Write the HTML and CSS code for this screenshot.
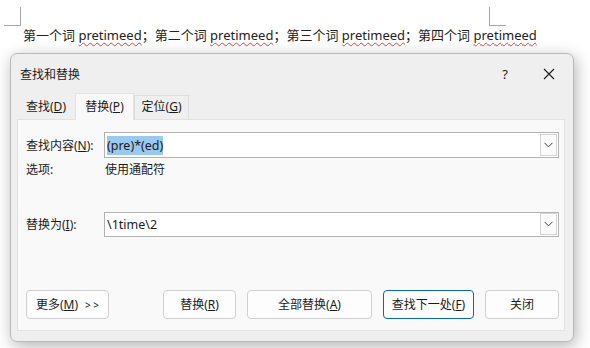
FILE: index.html
```html
<!DOCTYPE html>
<html lang="zh-CN">
<head>
<meta charset="utf-8">
<link rel="stylesheet" href="styles.css">
</head>
<body>
<div class="doc">
  <div class="marks">
    <span class="mark mark-left"></span>
    <span class="mark mark-right"></span>
  </div>
  <p class="doc-line">第一个词 <span class="spell">pretimeed</span>；第二个词 <span class="spell">pretimeed</span>；第三个词 <span class="spell">pretimeed</span>；第四个词 <span class="spell">pretimeed</span></p>
</div>

<div class="dialog">
  <div class="titlebar">
    <span class="title">查找和替换</span>
    <span class="help">?</span>
    <span class="close">
      <svg width="12" height="12" viewBox="0 0 12 12"><path d="M1 1 L11 11 M11 1 L1 11" stroke="#1b1b1b" stroke-width="1.1" fill="none"/></svg>
    </span>
  </div>
  <div class="tabs">
    <span class="tab tab-first">查找(<u>D</u>)</span>
    <span class="tab tab-active">替换(<u>P</u>)</span>
    <span class="tab">定位(<u>G</u>)</span>
  </div>
  <div class="panel">
    <div class="row">
      <span class="label">查找内容(<u>N</u>):</span>
      <div class="field">
        <span class="value"><span class="sel">(pre)*(ed)</span></span>
        <span class="drop"><svg width="9" height="6" viewBox="0 0 9 6"><path d="M0.5 0.8 L4.5 4.8 L8.5 0.8" stroke="#444" stroke-width="1" fill="none"/></svg></span>
      </div>
    </div>
    <div class="row-opt">
      <span class="label">选项:</span>
      <span class="opt">使用通配符</span>
    </div>
    <div class="row row-replace">
      <span class="label">替换为(<u>I</u>):</span>
      <div class="field">
        <span class="value">\1time\2</span>
        <span class="drop"><svg width="9" height="6" viewBox="0 0 9 6"><path d="M0.5 0.8 L4.5 4.8 L8.5 0.8" stroke="#444" stroke-width="1" fill="none"/></svg></span>
      </div>
    </div>
    <div class="buttons">
      <span class="btn btn-more">更多(<u>M</u>)<span class="chev">&gt; &gt;</span></span>
      <span class="btn btn-replace">替换(<u>R</u>)</span>
      <span class="btn btn-all">全部替换(<u>A</u>)</span>
      <span class="btn btn-next">查找下一处(<u>F</u>)</span>
      <span class="btn btn-close">关闭</span>
    </div>
  </div>
</div>
</body>
</html>
```

FILE: styles.css
```css
html, body {
  margin: 0;
  padding: 0;
}
body {
  width: 590px;
  height: 348px;
  overflow: hidden;
  background: #ffffff;
  font-family: "Noto Sans", "Noto Sans CJK SC", sans-serif;
  font-size: 12px;
  color: #1b1b1b;
}
.doc {
  padding-top: 7px;
}
.marks {
  display: flex;
  height: 19px;
}
.mark {
  display: block;
  width: 17px;
  height: 19px;
  box-sizing: border-box;
  border-bottom: 1px solid #a6a6a6;
}
.mark-left {
  margin-left: 4px;
  border-right: 1px solid #a6a6a6;
}
.mark-right {
  margin-left: 468px;
  border-left: 1px solid #a6a6a6;
}
.doc-line {
  margin: 0;
  padding-left: 23px;
  font-size: 13px;
  line-height: 18px;
  color: #222;
  white-space: nowrap;
}
.spell {
  text-decoration: underline wavy #e0413b;
  text-decoration-thickness: 1px;
  text-underline-offset: 2px;
  text-decoration-skip-ink: none;
}
.dialog {
  margin: 9px 0 0 10px;
  width: 564px;
  height: 289px;
  box-sizing: border-box;
  background: #efefef;
  border: 1px solid #b9b9b9;
  border-radius: 7px;
  box-shadow: 2px 4px 16px rgba(0, 0, 0, 0.3);
  display: flex;
  flex-direction: column;
}
.titlebar {
  height: 39px;
  display: flex;
  align-items: center;
  padding-left: 9px;
}
.title {
  font-size: 12px;
  flex: 1;
}
.help {
  font-size: 13px;
  width: 10px;
  margin-right: 33px;
  text-align: center;
}
.close {
  display: flex;
  width: 12px;
  height: 12px;
  margin-right: 18px;
}
.tabs {
  display: flex;
  align-items: flex-end;
  height: 26px;
  margin-left: 6px;
}
.tab {
  box-sizing: border-box;
  height: 24px;
  line-height: 22px;
  padding: 0 6px;
  text-align: center;
  border: 1px solid #dedede;
  border-bottom: none;
  background: #efefef;
}
.tab-first {
  width: 58px;
  border-color: transparent;
}
.tab-active {
  width: 59px;
  height: 27px;
  line-height: 25px;
  background: #f9f9f9;
  border-color: #e2e2e2;
  margin-bottom: -1px;
  position: relative;
}
.tab:last-child {
  width: 55px;
}
.panel {
  box-sizing: border-box;
  margin-left: 6px;
  width: 548px;
  height: 212px;
  background: #f9f9f9;
  border: 1px solid #e2e2e2;
  padding: 12px 5px 11px 8px;
  display: flex;
  flex-direction: column;
}
.row {
  display: flex;
  align-items: center;
  height: 26px;
}
.label {
  width: 78px;
  flex: none;
}
.field {
  flex: 1;
  height: 26px;
  box-sizing: border-box;
  border: 1px solid #b3b3b3;
  background: #ffffff;
  display: flex;
  align-items: center;
  padding: 0 1px 0 2px;
}
.value {
  flex: 1;
  font-size: 12.5px;
}
.sel {
  background: #99c8f0;
  padding: 1px 0;
}
.drop {
  width: 17px;
  height: 22px;
  box-sizing: border-box;
  border: 1px solid #d4d4d4;
  display: flex;
  align-items: center;
  justify-content: center;
  background: #fbfbfb;
}
.row-opt {
  display: flex;
  margin-top: 4px;
  height: 16px;
  line-height: 16px;
}
.opt {
  padding-left: 1px;
}
.row-replace {
  margin-top: 33px;
}
.row-replace .field {
  height: 25px;
}
.buttons {
  margin-top: auto;
  display: flex;
  height: 29px;
}
.btn {
  box-sizing: border-box;
  height: 29px;
  line-height: 27px;
  border: 1px solid #d0d0d0;
  border-radius: 4px;
  background: #fdfdfd;
  text-align: center;
}
.chev {
  font-size: 10px;
  margin-left: 7px;
}
.btn-more {
  width: 83px;
  margin-right: 54px;
}
.btn-replace {
  width: 73px;
  margin-right: 11px;
}
.btn-all {
  width: 125px;
  margin-right: 11px;
}
.btn-next {
  width: 91px;
  margin-right: 11px;
  border-color: #0a66b8;
}
.btn-close {
  width: 74px;
}
```
